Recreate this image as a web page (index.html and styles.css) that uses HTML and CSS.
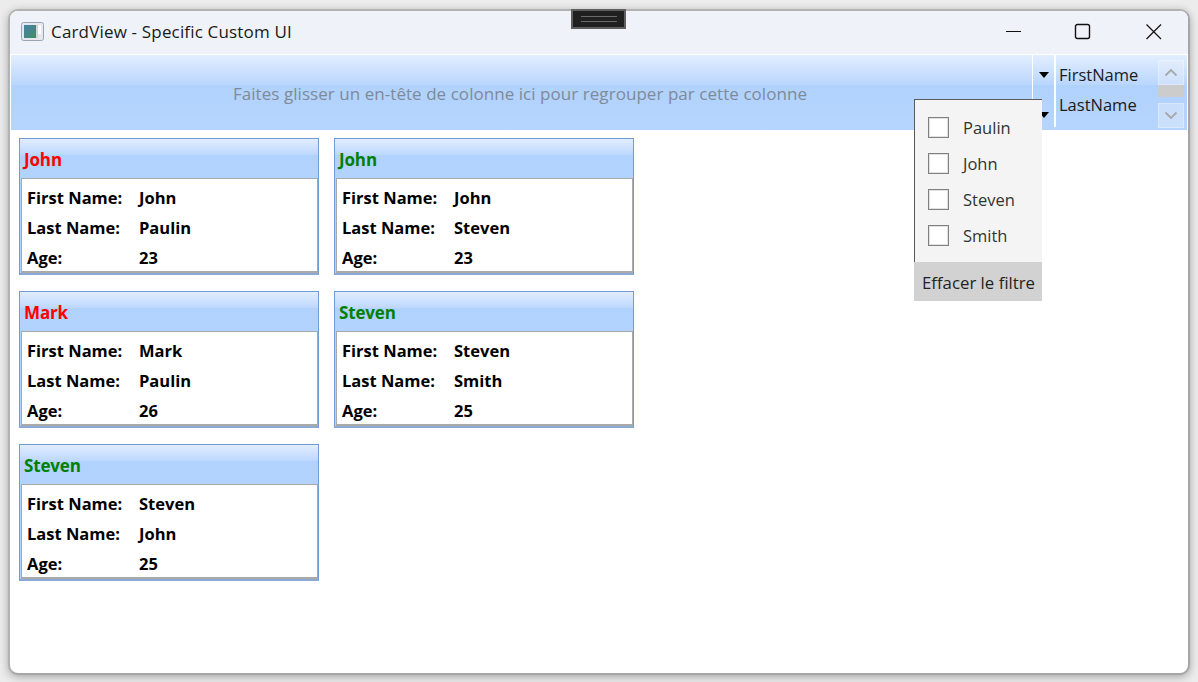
FILE: index.html
```html
<!DOCTYPE html>
<html>
<head>
    <meta charset="utf-8" />
    <title>CardView - Specific Custom UI</title>
    <link rel="stylesheet" href="styles.css">
</head>
<body>
    <div class="window">
        <div class="titlebar">
            <svg class="app-icon" width="23" height="19" viewBox="0 0 23 19">
                <defs>
                    <linearGradient id="icon-fill" x1="0" y1="0" x2="1" y2="1">
                        <stop offset="0" stop-color="#4a7fa8" />
                        <stop offset="1" stop-color="#3f8f63" />
                    </linearGradient>
                </defs>
                <rect x="0.5" y="0.5" width="22" height="18" rx="2" fill="#e4e9ee" stroke="#9aa5b1" />
                <rect x="3" y="3" width="12" height="13" fill="url(#icon-fill)" />
                <rect x="15" y="3" width="2" height="13" fill="#c9d8d2" />
                <rect x="17" y="3" width="3" height="9" fill="#fbfcfb" />
            </svg>
            <span class="title">CardView - Specific Custom UI</span>
            <div class="controls">
                <svg width="16" height="16" viewBox="0 0 16 16"><path d="M0 8.5h15" stroke="#111" fill="none" /></svg>
                <svg width="16" height="16" viewBox="0 0 16 16"><rect x="-0.5" y="1.5" width="14" height="14" rx="2" stroke="#111" stroke-width="1.4" fill="none" /></svg>
                <svg width="16" height="16" viewBox="0 0 16 16"><path d="M0.5 1.5l14.5 14.5M15 1.5L0.5 16" stroke="#111" stroke-width="1.2" fill="none" /></svg>
            </div>
        </div>

        <div class="group-panel">
            <div class="group-hint">Faites glisser un en-tête de colonne ici pour regrouper par cette colonne</div>
            <div class="arrows">
                <span class="arrow"></span>
                <span class="arrow"></span>
            </div>
            <div class="fields">
                <div>FirstName</div>
                <div>LastName</div>
            </div>
            <div class="scrollbar">
                <div class="scroll-btn">
                    <svg width="14" height="9" viewBox="0 0 14 9"><path d="M1.5 7.5L7 2l5.5 5.5" stroke="#a8a8a8" stroke-width="1.8" fill="none" /></svg>
                </div>
                <div class="scroll-thumb"></div>
                <div class="scroll-btn">
                    <svg width="14" height="9" viewBox="0 0 14 9"><path d="M1.5 1.5L7 7l5.5-5.5" stroke="#a8a8a8" stroke-width="1.8" fill="none" /></svg>
                </div>
            </div>
        </div>

        <div class="cards">
            <div class="card">
                <div class="card-head red">John</div>
                <div class="card-body">
                    <span>First Name:</span><span>John</span>
                    <span>Last Name:</span><span>Paulin</span>
                    <span>Age:</span><span>23</span>
                </div>
            </div>
            <div class="card">
                <div class="card-head green">John</div>
                <div class="card-body">
                    <span>First Name:</span><span>John</span>
                    <span>Last Name:</span><span>Steven</span>
                    <span>Age:</span><span>23</span>
                </div>
            </div>
            <div class="card">
                <div class="card-head red">Mark</div>
                <div class="card-body">
                    <span>First Name:</span><span>Mark</span>
                    <span>Last Name:</span><span>Paulin</span>
                    <span>Age:</span><span>26</span>
                </div>
            </div>
            <div class="card">
                <div class="card-head green">Steven</div>
                <div class="card-body">
                    <span>First Name:</span><span>Steven</span>
                    <span>Last Name:</span><span>Smith</span>
                    <span>Age:</span><span>25</span>
                </div>
            </div>
            <div class="card">
                <div class="card-head green">Steven</div>
                <div class="card-body">
                    <span>First Name:</span><span>Steven</span>
                    <span>Last Name:</span><span>John</span>
                    <span>Age:</span><span>25</span>
                </div>
            </div>
        </div>

        <div class="filter-popup">
            <div class="filter-list">
                <label class="filter-item"><span class="check"></span>Paulin</label>
                <label class="filter-item"><span class="check"></span>John</label>
                <label class="filter-item"><span class="check"></span>Steven</label>
                <label class="filter-item"><span class="check"></span>Smith</label>
            </div>
            <div class="filter-clear">Effacer le filtre</div>
        </div>

        <div class="handle"><div class="handle-grip"></div></div>
    </div>
</body>
</html>
```

FILE: styles.css
```css
html, body {
    margin: 0;
    height: 100%;
    width: 100%;
    overflow: hidden;
    background-color: #ececec;
    font: 16.5px "Open Sans", "Noto Sans", sans-serif;
}

body {
    padding: 9px 8px 7px 8px;
    box-sizing: border-box;
}

.window {
    position: relative;
    height: 666px;
    width: 1182px;
    box-sizing: border-box;
    border: 2px solid #b2b2b2;
    border-bottom-color: #a6a6a6;
    border-right-color: #a6a6a6;
    border-radius: 10px;
    background-color: white;
    box-shadow: 0 2px 9px rgba(0, 0, 0, 0.3);
}

.titlebar {
    height: 40px;
    padding: 0 0 3px 11px;
    display: flex;
    align-items: center;
    background-color: #eff3f9;
    border-bottom: 1px solid white;
    border-radius: 8px 8px 0 0;
}

.app-icon {
    margin-right: 7px;
}

.title {
    font-size: 17px;
    color: #1a1a1a;
    letter-spacing: 0.17px;
}

.controls {
    margin-left: auto;
    display: flex;
    gap: 54px;
    padding-right: 26px;
}

.controls svg {
    overflow: visible;
}

.group-panel {
    height: 75px;
    margin: 0 1px;
    display: flex;
    background: linear-gradient(#e3eeff 0, #b9d6fd 30px, #b0d2fd 30px, #b6d5fe 100%);
}

.group-hint {
    width: 1018px;
    padding: 27px 3px 0 0;
    text-align: center;
    font-size: 17px;
    letter-spacing: 0.05px;
    color: #7f8a99;
    border-right: 1px solid white;
    margin-bottom: 3px;
}

.arrows {
    width: 23px;
    border-right: 2px solid white;
    margin-bottom: 3px;
    padding-top: 4px;
    box-sizing: border-box;
    display: flex;
    flex-direction: column;
    align-items: center;
}

.arrow {
    width: 0;
    height: 0;
    margin: 13px 0 21px 0;
    border-left: 5px solid transparent;
    border-right: 5px solid transparent;
    border-top: 6px solid black;
}

.fields {
    width: 99px;
    padding: 5px 0 0 3px;
    color: #1a1a1a;
}

.fields div {
    height: 30px;
    line-height: 30px;
}

.scrollbar {
    width: 26px;
    margin-top: 5px;
    height: 68px;
    display: flex;
    flex-direction: column;
}

.scroll-btn {
    height: 25px;
    display: flex;
    align-items: center;
    justify-content: center;
    background-color: rgba(235, 240, 248, 0.4);
    border: 1px solid rgba(255, 255, 255, 0.3);
    box-sizing: border-box;
}

.scroll-thumb {
    height: 12px;
    background-color: #cccccc;
    margin-bottom: 6px;
}

.cards {
    padding: 8px 0 0 9px;
    display: grid;
    grid-template-columns: 300px 300px;
    column-gap: 15px;
    row-gap: 16px;
}

.card {
    height: 137px;
    box-sizing: border-box;
    border: 1px solid #6f9bd6;
    border-bottom: 2px solid #8aa9d6;
    background-color: #b2d3fe;
}

.card-head {
    height: 39px;
    padding: 9px 0 0 4px;
    box-sizing: border-box;
    font-weight: 700;
    font-size: 17px;
    letter-spacing: -0.15px;
    background: linear-gradient(#e2edff 0, #bcd8fe 16px, #b0d2fd 16px, #b2d3fe 100%);
}

.red {
    color: #ff0000;
}

.green {
    color: #008000;
}

.card-body {
    height: 95px;
    margin: 0 0 0 1px;
    box-sizing: border-box;
    border: 1px solid #a9a9a9;
    border-bottom-width: 2px;
    background-color: white;
    padding: 3px 0 0 5px;
    display: grid;
    grid-template-columns: 112px 1fr;
    grid-auto-rows: 30px;
    align-items: center;
    font-weight: 700;
    font-size: 16.5px;
    color: black;
}

.filter-popup {
    position: absolute;
    left: 904px;
    top: 88px;
    width: 128px;
    background-color: #f4f4f4;
    color: #333;
}

.filter-list {
    height: 163px;
    border-top: 1px solid #5a5a5a;
    border-left: 1px solid #5a5a5a;
    box-sizing: border-box;
    padding-top: 9px;
}

.filter-item {
    height: 36px;
    display: flex;
    align-items: center;
    padding-left: 13px;
}

.check {
    width: 19px;
    height: 19px;
    margin-right: 14px;
    border: 1px solid #808080;
    background-color: white;
    box-shadow: inset 0 0 0 1px #e2e2e2;
}

.filter-clear {
    height: 39px;
    line-height: 41px;
    padding-left: 8px;
    background-color: #d2d2d2;
    color: #222;
    font-size: 16.8px;
}

.handle {
    position: absolute;
    left: 561px;
    top: -2px;
    width: 55px;
    height: 20px;
    box-sizing: border-box;
    border: 2px solid #5f5f5f;
    background-color: #202020;
    display: flex;
    align-items: center;
    justify-content: center;
}

.handle-grip {
    width: 36px;
    height: 4px;
    border-top: 1px solid #6a6a6a;
    border-bottom: 1px solid #6a6a6a;
}
```
